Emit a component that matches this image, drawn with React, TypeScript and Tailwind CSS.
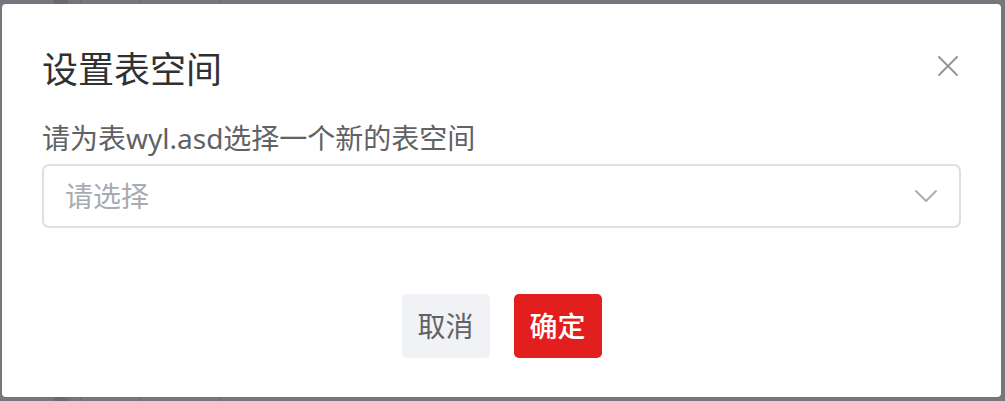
import React from "react";

export default function App() {
  return (
    <div
      className="relative w-[1005px] h-[401px] overflow-hidden bg-[#74777b]"
      style={{ fontFamily: '"Noto Sans", "Noto Sans CJK SC", sans-serif' }}
    >
      {/* faint background content peeking through overlay */}
      <div className="absolute inset-0 flex">
        <div className="w-[54px]" />
        <div className="w-[14px] bg-[#676a6e]" />
        <div className="w-[2px]" />
        <div className="w-[1px] bg-[#6a6d71]" />
        <div className="w-[9px]" />
        <div className="w-[1px] bg-[#6a6d71]" />
        <div className="w-[58px]" />
        <div className="w-[1px] bg-[#6a6d71]" />
        <div className="w-[80px]" />
        <div className="w-[1px] bg-[#6a6d71]" />
      </div>

      <div className="relative ml-[2px] mt-[4px] w-[999px] h-[393px] bg-white rounded-[4px] px-[40px] pt-[42px]">
        <button className="absolute right-[43px] top-[52px] w-[20px] h-[20px] text-[#909399]">
          <svg viewBox="0 0 20 20" width="20" height="20" fill="none" stroke="currentColor" strokeWidth="1.8" strokeLinecap="round">
            <path d="M1 1 L19 19 M19 1 L1 19" />
          </svg>
        </button>

        <div className="text-[36px] leading-[48px] text-[#303133]">设置表空间</div>

        <div className="mt-[24px] text-[28px] leading-[40px] text-[#606266]">请为表wyl.asd选择一个新的表空间</div>

        <div className="mt-[6px] h-[64px] border-2 border-[#dcdfe6] rounded-[7px] flex items-center justify-between pl-[21px] pr-[22px]">
          <span className="text-[28px] leading-[40px] text-[#a8abb2]">请选择</span>
          <svg viewBox="0 0 22 12" width="22" height="12" fill="none" stroke="#a8abb2" strokeWidth="1.8" strokeLinecap="round" strokeLinejoin="round">
            <path d="M1 1 L11 11 L21 1" />
          </svg>
        </div>

        <div className="mt-[66px] flex justify-center gap-[24px]">
          <button className="w-[88px] h-[64px] rounded-[5px] bg-[#f0f2f5] text-[#606266] text-[28px] leading-[40px]">取消</button>
          <button className="w-[88px] h-[64px] rounded-[5px] bg-[#e31e1e] text-white text-[28px] leading-[40px] font-medium">确定</button>
        </div>
      </div>
    </div>
  );
}
